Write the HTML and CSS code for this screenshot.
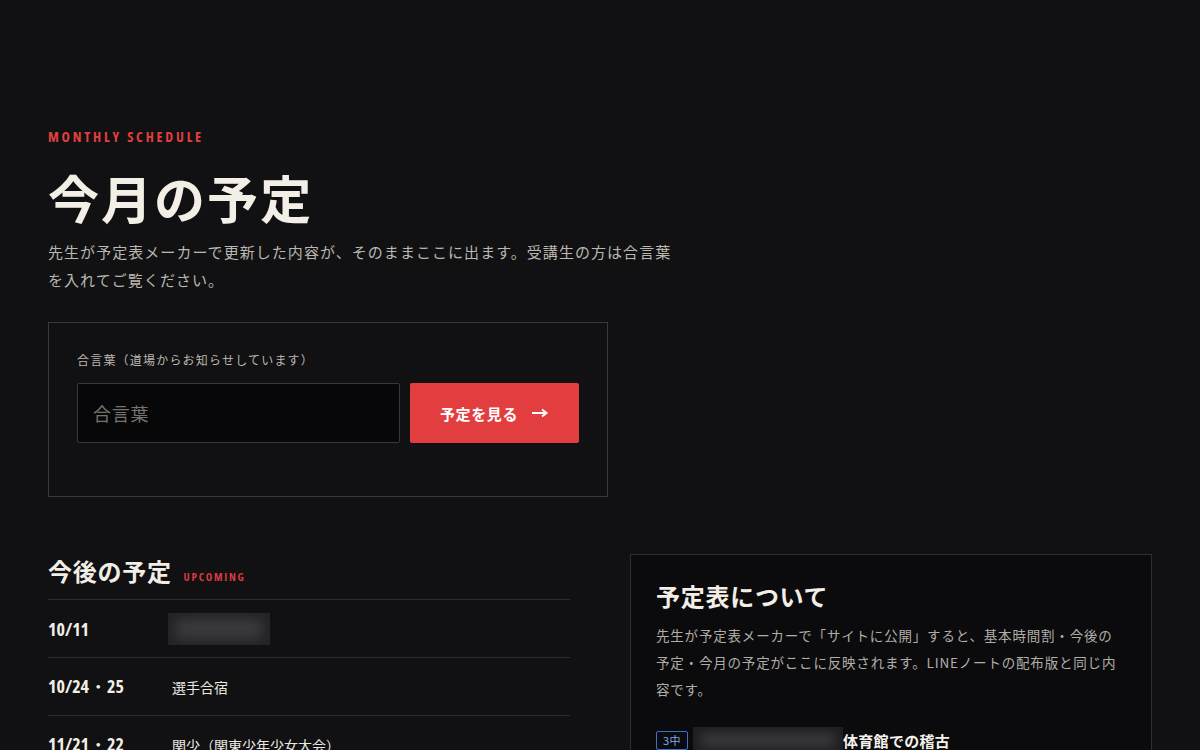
FILE: index.html
```html
<!DOCTYPE html>
<html lang="ja">
<head>
<meta charset="utf-8">
<title>今月の予定</title>
<link rel="stylesheet" href="styles.css">
</head>
<body>
<main class="page">
  <section class="intro">
    <p class="eyebrow">MONTHLY SCHEDULE</p>
    <h1 class="title">今月の予定</h1>
    <p class="lead">先生が予定表メーカーで更新した内容が、そのままここに出ます。受講生の方は合言葉を入れてご覧ください。</p>

    <form class="pass-box">
      <label class="pass-label" for="pass">合言葉（道場からお知らせしています）</label>
      <div class="pass-row">
        <input id="pass" class="pass-input" type="password" placeholder="合言葉">
        <button type="button" class="pass-btn">予定を見る<svg class="arrow" width="18" height="10" viewBox="0 0 18 10" aria-hidden="true"><path d="M1 5H15M11 1.5L15.5 5L11 8.5" fill="none" stroke="#fff" stroke-width="2"/></svg></button>
      </div>
    </form>
  </section>

  <section class="lower">
    <div class="upcoming">
      <h2 class="sec-title">今後の予定<span class="sec-en">UPCOMING</span></h2>
      <ul class="event-list">
        <li class="event">
          <span class="date">10/11</span>
          <span class="blur blur-a"><span class="blur-in"></span></span>
        </li>
        <li class="event">
          <span class="date">10/24・25</span>
          <span class="event-name">選手合宿</span>
        </li>
        <li class="event">
          <span class="date">11/21・22</span>
          <span class="event-name">関少（関東少年少女大会）</span>
        </li>
      </ul>
    </div>

    <aside class="about">
      <h2 class="about-title">予定表について</h2>
      <p class="about-text">先生が予定表メーカーで「サイトに公開」すると、基本時間割・今後の予定・今月の予定がここに反映されます。LINEノートの配布版と同じ内容です。</p>
      <div class="about-item">
        <span class="badge">3中</span>
        <span class="blur blur-b"><span class="blur-in"></span></span>
        <span class="item-name">体育館での稽古</span>
      </div>
    </aside>
  </section>
</main>
</body>
</html>
```

FILE: styles.css
```css
* { box-sizing: border-box; }

html, body {
  margin: 0;
  padding: 0;
  background: #111113;
}

body {
  color: #f2eee6;
  font-family: "Noto Sans CJK JP", "Noto Sans", sans-serif;
  overflow: hidden;
  height: 750px;
}

.page {
  padding: 128px 48px 0;
}

.eyebrow {
  margin: 0;
  font-family: "Open Sans", sans-serif;
  font-stretch: 75%;
  font-weight: 700;
  font-size: 14px;
  line-height: 18px;
  letter-spacing: 0.2em;
  color: #e0403f;
}

.title {
  margin: 19px 0 0;
  font-size: 51px;
  line-height: 64px;
  font-weight: 700;
  letter-spacing: 0.04em;
  color: #f3efe6;
}

.lead {
  margin: 9px 0 0;
  max-width: 635px;
  font-size: 15px;
  line-height: 28px;
  letter-spacing: 0.07em;
  color: #bcb7af;
}

.pass-box {
  margin-top: 28px;
  width: 560px;
  border: 1px solid #3a3a3e;
  padding: 28px 28px 53px;
}

.pass-label {
  display: block;
  font-size: 12px;
  line-height: 18px;
  letter-spacing: 0.1em;
  color: #bcb7af;
}

.pass-row {
  margin-top: 14px;
  display: flex;
  gap: 10px;
}

.pass-input {
  width: 323px;
  height: 60px;
  background: #070709;
  border: 1px solid #38383c;
  border-radius: 2px;
  padding: 0 15px;
  font-family: "Noto Sans CJK JP", sans-serif;
  font-size: 18px;
  color: #eee;
  outline: none;
}

.pass-input::placeholder {
  color: #76736e;
  letter-spacing: 0.04em;
}

.pass-btn {
  width: 169px;
  height: 60px;
  border: 0;
  border-radius: 2px;
  background: #e23e40;
  color: #fff;
  font-family: "Noto Sans CJK JP", sans-serif;
  font-weight: 700;
  font-size: 15px;
  letter-spacing: 0.04em;
  display: flex;
  align-items: center;
  justify-content: center;
  gap: 13px;
  padding: 0;
  cursor: pointer;
}

.arrow {
  display: block;
  flex: none;
}

.lower {
  margin-top: 57px;
  display: grid;
  grid-template-columns: 1fr 1fr;
  gap: 60px;
  align-items: start;
}

.sec-title {
  margin: 0;
  font-size: 24px;
  line-height: 34px;
  height: 46px;
  font-weight: 700;
  letter-spacing: 0.03em;
  padding-bottom: 11px;
  border-bottom: 1px solid #2c2c30;
}

.sec-en {
  margin-left: 12px;
  font-family: "Open Sans", sans-serif;
  font-stretch: 75%;
  font-weight: 700;
  font-size: 11px;
  line-height: 1;
  letter-spacing: 0.16em;
  color: #d93b3d;
}

.event-list {
  list-style: none;
  margin: 0;
  padding: 0;
}

.event {
  display: flex;
  align-items: center;
  height: 58px;
  border-bottom: 1px solid #2c2c30;
}

.date {
  width: 124px;
  flex: none;
  font-family: "Open Sans", sans-serif;
  font-stretch: 75%;
  font-weight: 700;
  font-size: 18px;
  color: #f3efe6;
}

.event-name {
  font-size: 14px;
  color: #ece8e0;
}

.blur {
  display: inline-block;
  position: relative;
  overflow: hidden;
  background: #232326;
}

.blur-in {
  position: absolute;
  inset: 6px 8px;
  background: #3a3a3c;
  filter: blur(6px);
}

.blur-a {
  width: 102px;
  height: 32px;
  margin-left: -4px;
}

.about {
  border: 1px solid #2f2f33;
  background: #0b0b0d;
  padding: 24px 25px 40px;
}

.about-title {
  margin: 0;
  font-size: 24px;
  line-height: 34px;
  font-weight: 700;
  letter-spacing: 0.03em;
}

.about-text {
  margin: 9px 0 0;
  font-size: 13.5px;
  line-height: 27px;
  letter-spacing: 0.06em;
  color: #b2aea7;
}

.about-item {
  margin-top: 24px;
  display: flex;
  align-items: center;
  height: 26px;
}

.badge {
  display: inline-flex;
  align-items: center;
  height: 19px;
  padding: 0 6px;
  border: 1px solid #3d6fd0;
  border-radius: 2px;
  font-size: 11px;
  color: #7ea6ec;
  letter-spacing: 0.04em;
}

.blur-b {
  width: 150px;
  height: 26px;
  margin-left: 5px;
  background: #1e1e21;
}

.item-name {
  font-size: 15px;
  font-weight: 700;
  color: #f5f2ec;
  letter-spacing: 0.02em;
}
```
